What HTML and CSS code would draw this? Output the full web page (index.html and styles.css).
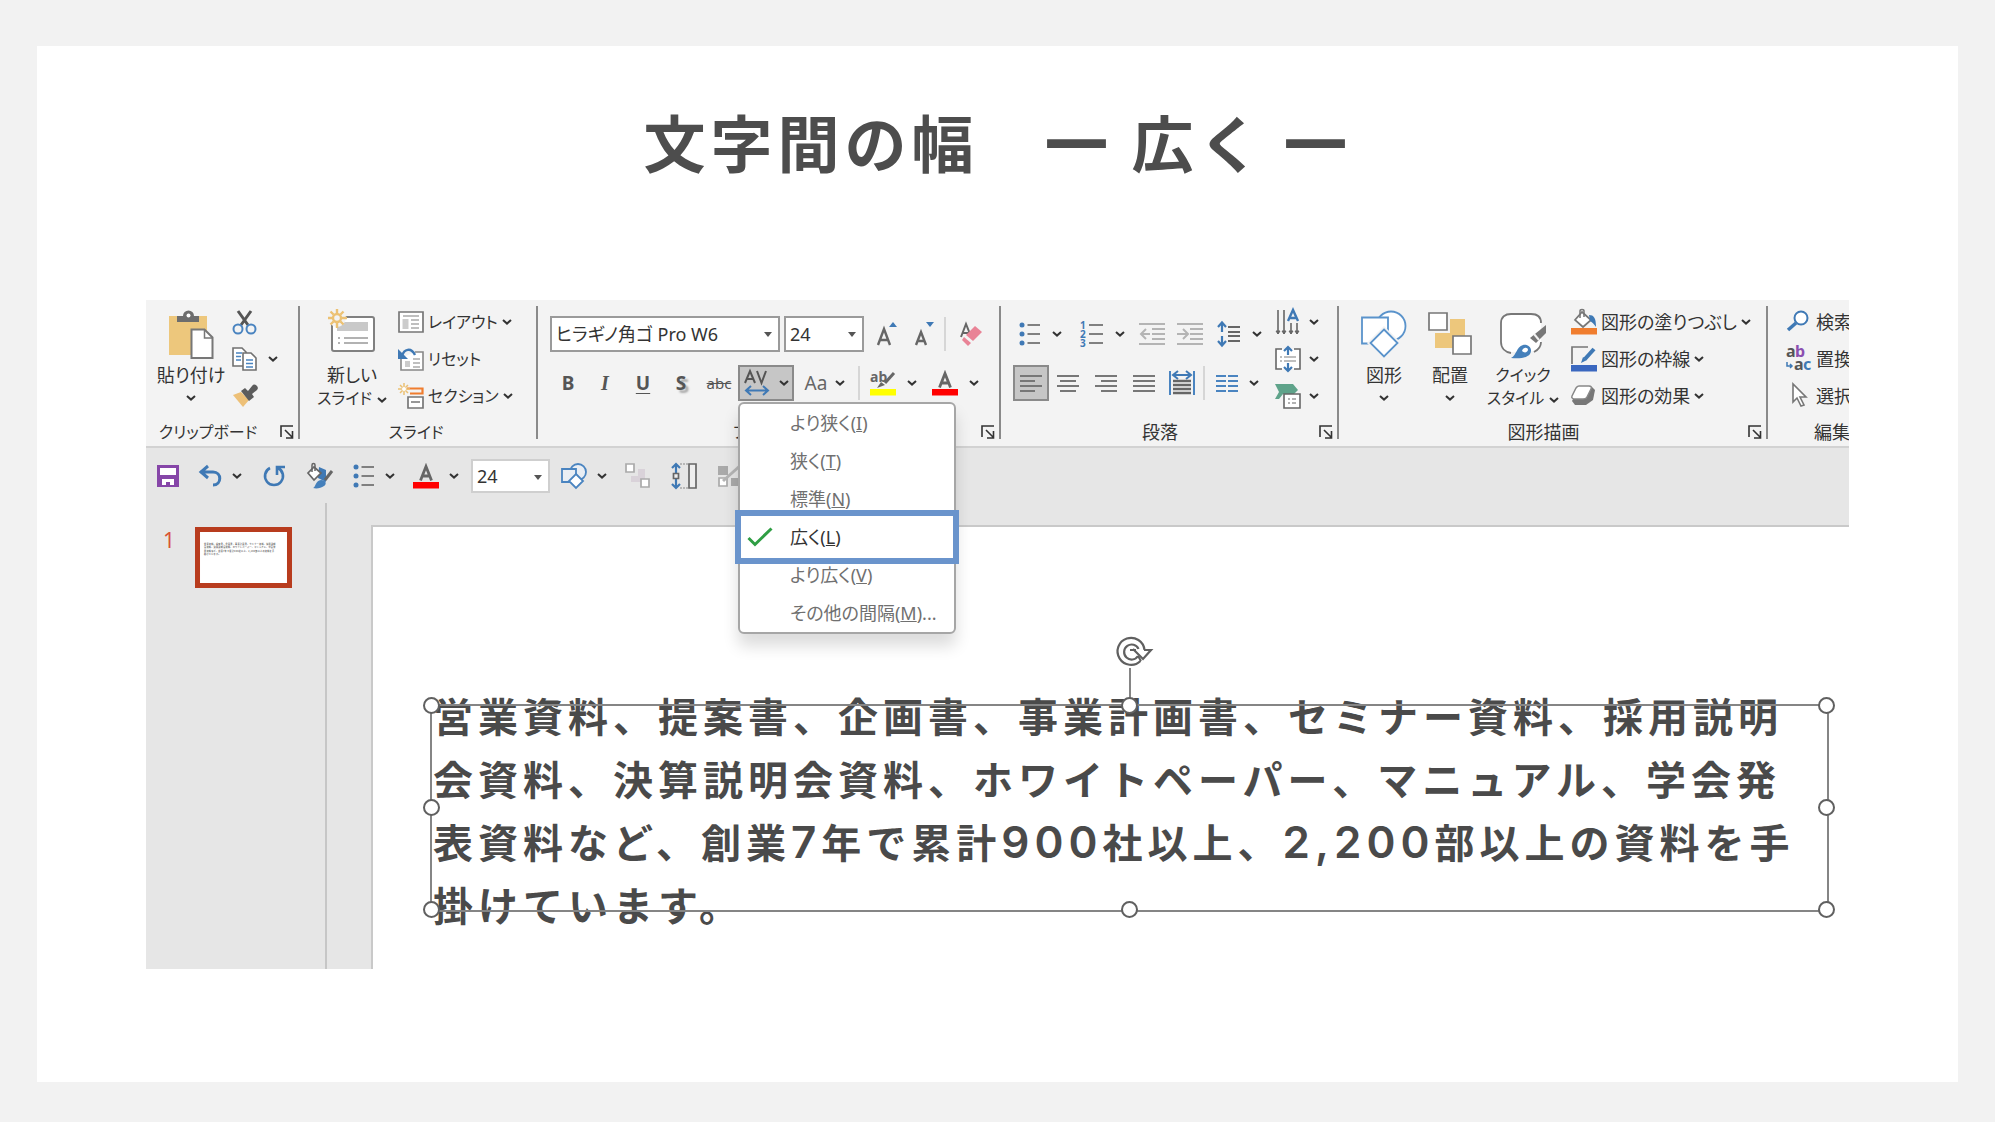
FILE: index.html
```html
<!DOCTYPE html>
<html lang="ja">
<head>
<meta charset="utf-8">
<title>文字間の幅 ― 広く ―</title>
<link rel="stylesheet" href="styles.css">
</head>
<body>
<svg class="sprite" aria-hidden="true">
  <symbol id="chev" viewBox="0 0 10 6"><path d="M1 1l4 3.6L9 1" fill="none" stroke="#333" stroke-width="2"/></symbol>
  <symbol id="launch" viewBox="0 0 14 14"><path d="M1 12V1h12M5 5l7 7M12.500 6v7H6" fill="none" stroke="#333" stroke-width="1.6"/></symbol>
  <symbol id="bullets" viewBox="0 0 22 24"><g fill="#3f79b5"><circle cx="3" cy="3" r="2.500"/><circle cx="3" cy="12" r="2.500"/><circle cx="3" cy="21" r="2.500"/></g><path d="M8.500 3H21M8.500 12H21M8.500 21H21" stroke="#808080" stroke-width="2"/></symbol>
  <symbol id="fontcolor" viewBox="0 0 26 26"><path d="M7.500 17.500L13 3.500l5.500 14M9.500 13h7" fill="none" stroke="#666" stroke-width="2.800"/><path d="M0 19h26v6.500H0z" fill="#f00"/></symbol>
</svg>
<main class="page">
  <h1 class="title">文字間の幅　<span class="dash">―</span> 広く <span class="dash">―</span></h1>
  <div class="app">
    <div class="ribbon">
      <section class="group clipboard">
        <div class="tools">
          <button class="big"><svg width="46" height="48" viewBox="0 0 46 48"><path d="M1 6h38v39H1z" fill="#edc77c"/><path d="M9 12V6h6a5.500 5.500 0 0 1 11 0h5v6z" fill="#6d6d6d"/><circle cx="20.500" cy="5.500" r="2" fill="#fff"/><path d="M23.500 19.500h13l8 8V48h-21z" fill="#fff" stroke="#777" stroke-width="2"/><path d="M36.500 20v8h8" fill="none" stroke="#777" stroke-width="1.500"/></svg><span>貼り付け</span><svg width="10" height="6"><use href="#chev"/></svg></button>
          <div class="stack">
            <button aria-label="切り取り"><svg width="26" height="26" viewBox="0 0 26 26"><path d="M6 2l10 14M19 2L9 16" stroke="#555" stroke-width="3"/><g fill="none" stroke="#4a84c0" stroke-width="2"><circle cx="6" cy="20" r="4.500"/><circle cx="19" cy="20" r="4.500"/></g></svg></button>
            <button aria-label="コピー"><svg width="26" height="26" viewBox="0 0 26 26"><g fill="#fff" stroke="#707070" stroke-width="1.600"><path d="M1 2h9l4 4v14H1z"/><path d="M11 7h8l5 5v12H11z"/></g><path d="M4 7h6M4 10.500h5M4 14h5M14 14h7M14 17.500h7M14 21h7" stroke="#4a84c0" stroke-width="1.700"/></svg><svg width="10" height="6"><use href="#chev"/></svg></button>
            <button aria-label="書式のコピー"><svg width="26" height="26" viewBox="0 0 26 26"><path d="M1 12l8-3 8 8-6 7z" fill="#edc077"/><path d="M9 8l4-3 3 3 4-5a3 3 0 0 1 5 4l-5 4 2 3-5 4z" fill="#5c5c5c"/></svg></button>
          </div>
        </div>
        <footer><span class="kana">クリップボード</span><button aria-label="クリップボードの設定"><svg width="14" height="14"><use href="#launch"/></svg></button></footer>
      </section>

      <section class="group slides">
        <div class="tools">
          <button class="big"><svg width="48" height="48" viewBox="0 0 48 48"><rect x="4" y="7" width="42" height="34" rx="2" fill="#fff" stroke="#808080" stroke-width="2"/><path d="M9 12h31v9H9z" fill="#c9c9c9"/><path d="M16 28h24M16 33h24M10 28h2M10 33h2" stroke="#999" stroke-width="1.500"/><circle cx="9" cy="8" r="9" fill="#f3f3f3"/><g stroke="#ecc173" stroke-width="2.400" fill="none"><circle cx="9" cy="8" r="4"/><path d="M9-1v4M9 13v5M0 8h4M14 8h5M2.500 1.500l3 3M12.500 11.500l3 3M15.500 1.500l-3 3M5.500 11.500l-3 3"/></g></svg><span>新しい</span><span class="kana">スライド<svg width="10" height="6"><use href="#chev"/></svg></span></button>
          <div class="stack">
            <button><svg width="26" height="24" viewBox="0 0 26 24"><path d="M1 2h24v20H1z" fill="#fff" stroke="#777" stroke-width="1.700"/><path d="M5 6h16M13 10h8M13 14h8M13 18h8" stroke="#aaa" stroke-width="1.700"/><path d="M4.500 9h6v10h-6z" fill="#ccc"/></svg><span class="kana">レイアウト</span><svg width="10" height="6"><use href="#chev"/></svg></button>
            <button><svg width="26" height="24" viewBox="0 0 26 24"><path d="M3 11v12h22V5h-8" fill="#fff" stroke="#888" stroke-width="1.600"/><path d="M15 12h7M15 16h7M15 20h7" stroke="#aaa" stroke-width="1.600"/><path d="M7 14h5v6H7z" fill="#ccc"/><path d="M17 8C13 0 6 2 4 9" fill="none" stroke="#3f79b5" stroke-width="2.400"/><path d="M0 2v10h10z" fill="#3f79b5"/></svg><span class="kana">リセット</span></button>
            <button><svg width="26" height="26" viewBox="0 0 26 26"><path d="M9 5.500h15.500v5H12" fill="none" stroke="#f07d2e" stroke-width="2.200"/><path d="M10 14h15v11H10zM13 19h9" fill="#fff" stroke="#777" stroke-width="1.700"/><path d="M6 0v12M0 6h12M2 2l8 8M10 2l-8 8" stroke="#ecc173" stroke-width="1.500"/><circle cx="6" cy="6" r="2" fill="#fff"/></svg><span class="kana">セクション</span><svg width="10" height="6"><use href="#chev"/></svg></button>
          </div>
        </div>
        <footer><span class="kana">スライド</span></footer>
      </section>

      <section class="group font">
        <div class="rows">
          <div class="row">
            <div class="combo name"><select aria-label="フォント"><option>ヒラギノ角ゴ Pro W6</option></select></div>
            <div class="combo size"><select aria-label="フォント サイズ"><option>24</option></select></div>
            <button aria-label="拡大" class="c38"><svg width="22" height="26" viewBox="0 0 22 26"><path d="M2 24L8 8l6 16M4 19h8" fill="none" stroke="#666" stroke-width="2.400"/><path d="M13 6h8l-4-5z" fill="#3f79b5"/></svg></button>
            <button aria-label="縮小" class="c36"><svg width="22" height="26" viewBox="0 0 22 26"><path d="M3 24L8 11l5 13M5 20h6" fill="none" stroke="#666" stroke-width="2.400"/><path d="M13 1h8l-4 5z" fill="#3f79b5"/></svg></button>
            <i class="sep"></i>
            <button aria-label="書式のクリア" class="c46"><svg width="24" height="26" viewBox="0 0 24 26"><path d="M2 16L7 3l4 10M4 12h6" fill="none" stroke="#666" stroke-width="2"/><path d="M16 5l7 6-9 9-7-6z" fill="#e98396"/><path d="M5 16l7 6-3 3-6-6z" fill="#e98396"/></svg></button>
          </div>
          <div class="row">
            <button class="c36 b">B</button>
            <button class="c38 it">I</button>
            <button class="c38 u">U</button>
            <button class="c38 sh">S</button>
            <button class="c38 st">abc</button>
            <div class="spacing">
              <button class="pressed" aria-label="文字の間隔"><svg width="26" height="28" viewBox="0 0 26 28"><path d="M1 14L6 2l5 12M3 10h6M13 2l4.500 12L22 2" fill="none" stroke="#555" stroke-width="2"/><path d="M2 21.500h22M7 17l-5 4.500L7 26M19 17l5 4.500-5 4.500" fill="none" stroke="#3f79b5" stroke-width="2"/></svg><svg width="10" height="6"><use href="#chev"/></svg></button>
              <ul class="menu">
                <li><a href="#">より狭く(<u>I</u>)</a></li>
                <li><a href="#">狭く(<u>T</u>)</a></li>
                <li><a href="#">標準(<u>N</u>)</a></li>
                <li class="checked"><a href="#">広く(<u>L</u>)</a><svg class="tick" width="26" height="20" viewBox="0 0 26 20"><path d="M1.500 11l6.500 6.500L24.500 1.500" fill="none" stroke="#2f9e44" stroke-width="3"/></svg></li>
                <li><a href="#">より広く(<u>V</u>)</a></li>
                <li><a href="#">その他の間隔(<u>M</u>)...</a></li>
              </ul>
            </div>
            <button class="c62 aa"><span>Aa</span><svg width="10" height="6"><use href="#chev"/></svg></button>
            <i class="sep"></i>
            <button class="c62" aria-label="蛍光ペン"><svg width="26" height="26" viewBox="0 0 26 26"><text x="0" y="12" class="ab">ab</text><path d="M24 3l-9 10" stroke="#666" stroke-width="3"/><path d="M7 18l4-6 4 3z" fill="#666"/><path d="M0 19h26v6.500H0z" fill="#ff0"/></svg><svg width="10" height="6"><use href="#chev"/></svg></button>
            <button class="c62" aria-label="フォントの色"><svg width="26" height="26"><use href="#fontcolor"/></svg><svg width="10" height="6"><use href="#chev"/></svg></button>
          </div>
        </div>
        <footer><span class="kana">フォント</span><button aria-label="フォントの設定"><svg width="14" height="14"><use href="#launch"/></svg></button></footer>
      </section>

      <section class="group para">
        <div class="tools">
          <div class="rows">
            <div class="row">
              <button class="c62" aria-label="箇条書き"><svg width="22" height="24"><use href="#bullets"/></svg><svg width="10" height="6"><use href="#chev"/></svg></button>
              <button class="c62" aria-label="段落番号"><svg width="24" height="26" viewBox="0 0 24 26"><g class="num"><text x="0" y="8">1</text><text x="0" y="17">2</text><text x="0" y="26">3</text></g><path d="M9 4h14M9 13h14M9 22h14" stroke="#808080" stroke-width="2"/></svg><svg width="10" height="6"><use href="#chev"/></svg></button>
              <button class="c38" aria-label="インデントを減らす"><svg width="26" height="24" viewBox="0 0 26 24"><path d="M0 2h26M13 7h13M13 12h13M13 17h13M0 22h26M2 12h9M7 7l-5 5 5 5" fill="none" stroke="#b4b4b4" stroke-width="2"/></svg></button>
              <button class="c38" aria-label="インデントを増やす"><svg width="26" height="24" viewBox="0 0 26 24"><path d="M0 2h26M13 7h13M13 12h13M13 17h13M0 22h26M0 12h10M6 7l5 5-5 5" fill="none" stroke="#b4b4b4" stroke-width="2"/></svg></button>
              <button class="c60" aria-label="行間"><svg width="24" height="26" viewBox="0 0 24 26"><path d="M11 6h12M11 11h12M11 15h12M11 20h12" stroke="#666" stroke-width="2"/><path d="M5 2v9M1 6l4-4.500L9 6M5 15v9M1 20l4 4.500L9 20" fill="none" stroke="#3f79b5" stroke-width="2.200"/></svg><svg width="10" height="6"><use href="#chev"/></svg></button>
            </div>
            <div class="row align-row">
              <button class="pressed c36" aria-label="左揃え"><svg width="22" height="18" viewBox="0 0 22 18"><path d="M0 2h22M0 7h15M0 12h22M0 17h15" stroke="#777" stroke-width="2"/></svg></button>
              <button class="c38" aria-label="中央揃え"><svg width="22" height="18" viewBox="0 0 22 18"><path d="M0 2h22M3 7h16M0 12h22M3 17h16" stroke="#777" stroke-width="2"/></svg></button>
              <button class="c38" aria-label="右揃え"><svg width="22" height="18" viewBox="0 0 22 18"><path d="M0 2h22M6 7h16M0 12h22M6 17h16" stroke="#777" stroke-width="2"/></svg></button>
              <button class="c38" aria-label="両端揃え"><svg width="22" height="18" viewBox="0 0 22 18"><path d="M0 2h22M0 7h22M0 12h22M0 17h22" stroke="#777" stroke-width="2"/></svg></button>
              <button class="c38" aria-label="均等割り付け"><svg width="26" height="26" viewBox="0 0 26 26"><path d="M1 1v24M25 1v24" stroke="#4a84c0" stroke-width="2"/><path d="M4 5h18M9 1L4 5l5 4M17 1l5 4-5 4" fill="none" stroke="#3f79b5" stroke-width="2"/><path d="M4 11h18M4 15h18M4 19h18M4 23h18" stroke="#666" stroke-width="2.400"/></svg></button>
              <i class="sep"></i>
              <button class="c60" aria-label="段組み"><svg width="22" height="18" viewBox="0 0 22 18"><path d="M0 2h10M12 2h10M0 7h10M12 7h10M0 12h10M12 12h10M0 17h10M12 17h10" stroke="#4a84c0" stroke-width="2.200"/></svg><svg width="10" height="6"><use href="#chev"/></svg></button>
            </div>
          </div>
          <div class="stack">
            <button aria-label="文字列の方向"><svg width="26" height="26" viewBox="0 0 26 26"><path d="M3 1v24M9 1v24M16 14v11M22 14v11" stroke="#666" stroke-width="1.600"/><path d="M1 22h4l-2 3zM7 22h4l-2 3zM14 22h4l-2 3zM20 22h4l-2 3z" fill="#666" stroke="#666"/><path d="M13 12L18 1l5 11M15 9h6" fill="none" stroke="#3f79b5" stroke-width="2.400"/></svg><svg width="10" height="6"><use href="#chev"/></svg></button>
            <button aria-label="文字の配置"><svg width="26" height="26" viewBox="0 0 26 26"><path d="M1 3h24v20H1z" fill="#fff"/><path d="M7 3H1v20h6M19 3h6v20h-6" fill="none" stroke="#666" stroke-width="1.600"/><path d="M5 11h2M9 11h12M5 15h2M9 15h12" stroke="#aaa" stroke-width="1.500"/><path d="M13 1v8M9 5l4-4 4 4M13 17v8M9 21l4 4 4-4" fill="none" stroke="#3f79b5" stroke-width="2.200"/></svg><svg width="10" height="6"><use href="#chev"/></svg></button>
            <button aria-label="SmartArt に変換"><svg width="26" height="26" viewBox="0 0 26 26"><path d="M0 1h18l5 6-4 4H8l-4 5H0l4-7z" fill="#5fa38a"/><path d="M9 11h16v14H9z" fill="#fff" stroke="#666" stroke-width="1.600"/><path d="M13 16h2M17 16h4M13 20h2M17 20h4" stroke="#999" stroke-width="1.600"/></svg><svg width="10" height="6"><use href="#chev"/></svg></button>
          </div>
        </div>
        <footer><span>段落</span><button aria-label="段落の設定"><svg width="14" height="14"><use href="#launch"/></svg></button></footer>
      </section>

      <section class="group draw">
        <div class="tools">
          <button class="big"><svg width="48" height="48" viewBox="0 0 48 48"><g fill="#fff" stroke="#5a93cb" stroke-width="1.800"><circle cx="31" cy="16" r="14.500"/><path d="M2 7.500h26v26H2z"/><path d="M24 18L39 33 24 48 9 33z" stroke="#f3f3f3" stroke-width="3"/><path d="M24 19.500L37.500 33 24 46.500 10.500 33z"/></g></svg><span>図形</span><svg width="10" height="6"><use href="#chev"/></svg></button>
          <button class="big"><svg width="44" height="48" viewBox="0 0 44 48"><path d="M22 9h15v29H22zM7 23h16v15H7z" fill="#edc77c"/><path d="M1 3h18v17H1zM25 26h18v18H25z" fill="#fff" stroke="#777" stroke-width="1.700"/></svg><span>配置</span><svg width="10" height="6"><use href="#chev"/></svg></button>
          <button class="big"><svg width="48" height="48" viewBox="0 0 48 48"><path d="M12 42C6 42 2 38 2 32V13C2 7 6 4 12 4h20c6 0 10 3 10 9v19c0 4-2 8-6 9z" fill="#fff"/><path d="M12 43C6 42 2 38 2 32V13C2 7 6 4 12 4h20c6 0 10 3 10 9M42 32c0 5-3 8-7 10" fill="none" stroke="#777" stroke-width="1.800"/><path d="M47 15v8L37 33l-6-5z" fill="#777"/><path d="M35 24l5 6" stroke="#f3f3f3" stroke-width="2"/><path d="M12 48c6-3 5-11 12-13 6-1 10 4 7 9-3 4-11 5-19 4z" fill="#4580bb"/><path d="M23 41c1-4 6-4 6-1-1 3-4 3-6 1z" fill="#fff"/></svg><span class="kana">クイック</span><span class="kana">スタイル<svg width="10" height="6"><use href="#chev"/></svg></span></button>
          <div class="stack">
            <button><svg width="26" height="26" viewBox="0 0 26 26"><path d="M0 19h26v6.500H0z" fill="#f07d2e"/><path d="M11 3l9 8-8 7-8-7z" fill="#fff" stroke="#777" stroke-width="1.700"/><path d="M9 9V2c0-2 4-2 4 0v6" fill="none" stroke="#777" stroke-width="1.500"/><path d="M18 6c5 0 7 3 7 12-2-3-4-5-6-6z" fill="#3f79b5"/></svg><span>図形の塗りつぶし</span><svg width="10" height="6"><use href="#chev"/></svg></button>
            <button><svg width="26" height="26" viewBox="0 0 26 26"><path d="M0 19h26v6.500H0z" fill="#3a67bf"/><path d="M17 1H1v17" fill="none" stroke="#777" stroke-width="1.700"/><path d="M23 3L14 13" stroke="#3f79b5" stroke-width="4"/><path d="M10 17l2-6 4 3z" fill="#3f79b5"/></svg><span>図形の枠線</span><svg width="10" height="6"><use href="#chev"/></svg></button>
            <button><svg width="26" height="26" viewBox="0 0 26 26"><path d="M8 4h13l3 3-2 10-7 5H4l-3-4z" fill="#777"/><path d="M8 3h10c2 0 3 1 2 3l-4 8c-1 2-2 2-4 2H4c-2 0-4-1-3-3l4-8c1-1 1-2 3-2z" fill="#fff" stroke="#888" stroke-width="1.500"/></svg><span>図形の効果</span><svg width="10" height="6"><use href="#chev"/></svg></button>
          </div>
        </div>
        <footer><span>図形描画</span><button aria-label="図形の書式設定"><svg width="14" height="14"><use href="#launch"/></svg></button></footer>
      </section>

      <section class="group edit">
        <div class="tools">
          <div class="stack">
            <button><svg width="26" height="26" viewBox="0 0 26 26"><circle cx="15" cy="9" r="6.500" fill="#fff" stroke="#3f79b5" stroke-width="2"/><path d="M10 14l-8 7" stroke="#3f79b5" stroke-width="3.500"/></svg><span>検索</span></button>
            <button><svg width="26" height="26" viewBox="0 0 26 26"><g class="repl"><text x="0" y="11" fill="#555">a</text><text x="9" y="11" fill="#8b4fb0">b</text><text x="8" y="24" fill="#555">a</text><text x="17" y="24" fill="#3f79b5">c</text></g><path d="M1 16v4h5M4 18l2 2-2 2" fill="none" stroke="#3f79b5" stroke-width="1.500"/></svg><span>置換</span></button>
            <button><svg width="26" height="26" viewBox="0 0 26 26"><path d="M7 1v18l4-4 4 8 3-1-4-8h6z" fill="#fff" stroke="#777" stroke-width="1.600"/></svg><span>選択</span></button>
          </div>
        </div>
        <footer><span>編集</span></footer>
      </section>
    </div>

    <div class="quick">
      <button class="q42" aria-label="保存"><svg width="22" height="24" viewBox="0 0 22 24"><path d="M1.500 2.500h19v19h-19z" fill="#fff" stroke="#8646a8" stroke-width="3"/><path d="M1 11h20v11H1z" fill="#8646a8"/><path d="M5 15h12v6h-4v-3h-4v3H5z" fill="#fff"/></svg></button>
      <button class="q62" aria-label="元に戻す"><svg width="24" height="24" viewBox="0 0 24 24"><path d="M2 8h13c9 0 9 13 0 13M10 2L3 8l7 6" fill="none" stroke="#3f79b5" stroke-width="3"/></svg><svg width="10" height="6"><use href="#chev"/></svg></button>
      <button class="q46" aria-label="やり直し"><svg width="22" height="24" viewBox="0 0 22 24"><path d="M7 4a9 9 0 1 0 8 0M14 11V3h8" fill="none" stroke="#3f79b5" stroke-width="2.600"/></svg></button>
      <button class="q46" aria-label="書式"><svg width="26" height="26" viewBox="0 0 26 26"><path d="M12 4l7 3v12l-8-4z" fill="#3f79b5"/><path d="M7 4l7 6-7 7-6-7z" fill="#fff" stroke="#666" stroke-width="1.700"/><path d="M5 9V2c0-2 3-2 3 0v6" fill="none" stroke="#666" stroke-width="1.500"/><path d="M25 8l-7 9" stroke="#666" stroke-width="3"/><path d="M6 25c3-1 2-7 8-8 5 0 6 4 3 6-3 2-7 3-11 2z" fill="#4580bb"/></svg></button>
      <button class="q62" aria-label="箇条書き"><svg width="22" height="24"><use href="#bullets"/></svg><svg width="10" height="6"><use href="#chev"/></svg></button>
      <button class="q62" aria-label="フォントの色"><svg width="26" height="26"><use href="#fontcolor"/></svg><svg width="10" height="6"><use href="#chev"/></svg></button>
      <div class="combo qsize"><select aria-label="サイズ"><option>24</option></select></div>
      <button class="q62" aria-label="図形"><svg width="26" height="26" viewBox="0 0 26 26"><g fill="#e9eef4" stroke="#4a84c0" stroke-width="1.800"><circle cx="17" cy="9" r="8"/><path d="M1 6h14v13H1z"/><path d="M15 11l7 7-7 7-7-7z" fill="#fff"/></g></svg><svg width="10" height="6"><use href="#chev"/></svg></button>
      <button class="q46" aria-label="配置"><svg width="26" height="26" viewBox="0 0 26 26"><path d="M13 6h7v13h-7zM6 13h8v6H6z" fill="#d9d2d9"/><path d="M1 1h8v8H1zM16 16h8v8h-8z" fill="#fff" stroke="#aaa" stroke-width="1.700"/></svg></button>
      <button class="q46" aria-label="整列"><svg width="26" height="26" viewBox="0 0 26 26"><path d="M5 1v9M1 5l4-4 4 4M5 16v9M1 21l4 4 4-4" fill="none" stroke="#3f79b5" stroke-width="2.200"/><path d="M2.500 10.500h5v5h-5zM18 1h7v24h-7z" fill="#eee" stroke="#666" stroke-width="1.700"/><path d="M9 1h8M9 25h8" stroke="#888" stroke-dasharray="2 1"/></svg></button>
      <button class="q46" aria-label="図形の編集"><svg width="26" height="26" viewBox="0 0 26 26"><path d="M1 3h10v9H1zM14 15h10v8H14z" fill="#aaa"/><path d="M2 15h8v8H2z" fill="#fff" stroke="#aaa" stroke-width="1.700"/><path d="M25 1L6 18" stroke="#b5b5b5" stroke-width="3"/></svg></button>
    </div>

    <div class="workspace">
      <aside class="thumbs">
        <span class="no">1</span>
        <svg class="thumb" width="97" height="61" viewBox="-94 -94 1820 1144" role="img" aria-label="スライド 1"><path d="M-47-47h1726v1050H-47z" fill="#fff" stroke="#b83c1e" stroke-width="94"/><g class="mini"><text x="75" y="246">営業資料、提案書、企画書、事業計画書、セミナー資料、採用説明</text><text x="75" y="309">会資料、決算説明会資料、ホワイトペーパー、マニュアル、学会発</text><text x="75" y="372">表資料など、創業7年で累計900社以上、2,200部以上の資料を手</text><text x="75" y="435">掛けています。</text></g></svg>
      </aside>
      <article class="slide">
        <div class="textbox">
          <p>営業資料、提案書、企画書、事業計画書、セミナー資料、採用説明<br>会資料、決算説明会資料、ホワイトペーパー、マニュアル、学会発<br>表資料など、創業<span class="n">7</span>年で累計<span class="n">900</span>社以上、<span class="n">2,200</span>部以上の資料を手<br>掛けています。</p>
          <div class="frame">
            <svg class="rotate" width="42" height="34" viewBox="0 0 42 34"><path d="M27.500 25A13.500 13.500 0 1 1 31.500 14" fill="none" stroke="#606060" stroke-width="2.200"/><path d="M25 20a7.500 7.500 0 1 1 .5-7" fill="none" stroke="#606060" stroke-width="2.200"/><path d="M25 20l3 5" stroke="#606060" stroke-width="2"/><path d="M17 14h6M31 14h7l-8 9-10-10" fill="#fff" stroke="#606060" stroke-width="2.200"/></svg>
            <i class="stem"></i>
            <i class="h tl"></i><i class="h tc"></i><i class="h tr"></i><i class="h ml"></i><i class="h mr"></i><i class="h bl"></i><i class="h bc"></i><i class="h br"></i>
          </div>
        </div>
      </article>
    </div>
  </div>
</main>
</body>
</html>
```
FILE: styles.css
```css
* { box-sizing: border-box; }
body {
  margin: 0;
  padding: 46px 37px 40px;
  background: #f2f2f2;
  color: #333;
  font: 18px/24px "Noto Sans", "Noto Sans CJK JP", sans-serif;
}
svg { display: block; flex: none; overflow: visible; }
.sprite { position: absolute; width: 0; height: 0; }
.page { background: #fff; padding: 55px 109px 113px; }
.title {
  margin: 0 0 119px;
  text-align: center;
  color: #4d4d4d;
  font: 700 62px/80px "Noto Sans CJK JP", sans-serif;
  letter-spacing: 5px;
  white-space: nowrap;
}
.dash { -webkit-text-stroke: 6px #4d4d4d; }
.app { background: #e6e6e6; overflow: hidden; }

button, select {
  margin: 0;
  padding: 0;
  border: 0;
  background: none;
  color: inherit;
  font: inherit;
}
button {
  display: flex;
  align-items: center;
  justify-content: center;
  font-feature-settings: "palt";
  white-space: nowrap;
}
.kana { font-size: 16px; }

/* ribbon */
.ribbon {
  position: relative;
  z-index: 1;
  display: flex;
  padding: 6px 0 7px;
  background: #f3f3f3;
  border-bottom: 2px solid #d2d2d2;
}
.group {
  flex: none;
  display: flex;
  flex-direction: column;
  justify-content: space-between;
  height: 133px;
  border-right: 2px solid #8a8a8a;
}
.clipboard { width: 154px; }
.slides { width: 238px; }
.font { width: 463px; }
.para { width: 338px; }
.draw { width: 429px; }
.edit { width: 132px; }
.tools { display: flex; }
.group footer {
  display: flex;
  align-items: center;
  height: 14px;
  padding-right: 4px;
  line-height: 14px;
  font-feature-settings: "palt";
}
.group footer span { flex: 1; text-align: center; white-space: nowrap; }
.clipboard footer span { padding-right: 10px; }
.big {
  flex-direction: column;
  justify-content: flex-start;
  width: 66px;
  padding-top: 4px;
  line-height: 23px;
}
.big > svg:first-child { margin-bottom: 6px; }
.big > svg:last-child { margin-top: 8px; }
.big span svg { display: inline-block; margin-left: 5px; vertical-align: middle; }
.stack { display: flex; flex-direction: column; gap: 5px; }
.stack button { height: 32px; justify-content: flex-start; gap: 4px; }
.stack button svg + svg { margin-left: 4px; }
.clipboard .tools { gap: 8px; padding-left: 12px; }
.clipboard .stack button svg + svg { margin-left: 6px; }
.slides .tools { gap: 11px; padding-left: 17px; }
.slides .big { width: 70px; }

.rows { display: flex; flex-direction: column; gap: 13px; padding-top: 10px; }
.row { display: flex; align-items: center; height: 36px; }
.font .rows { padding-left: 12px; }
.row button { height: 36px; gap: 11px; flex: none; }
.c36 { width: 36px; }
.c38 { width: 38px; }
.c46 { width: 46px; }
.c60 { width: 60px; }
.c62 { width: 62px; }
.sep { flex: none; width: 2px; height: 34px; margin: 0 2px; background: #d6d6d6; }
.combo {
  position: relative;
  height: 36px;
  border: 2px solid #9a9a9a;
  background: #fff;
}
.combo::after {
  content: "";
  position: absolute;
  right: 6px;
  top: 14px;
  border: 4px solid transparent;
  border-top: 5px solid #555;
  border-bottom: 0;
}
.combo select {
  appearance: none;
  width: 100%;
  height: 100%;
  padding: 0 4px;
  font-feature-settings: "palt";
}
.name { width: 230px; margin-right: 4px; }
.size { width: 80px; margin-right: 4px; }
.b, .it, .u, .sh { font-weight: 700; font-size: 19px; color: #555; }
.row .it { font: italic 700 20px "Liberation Serif", serif; }
.row .u { text-decoration: underline; text-underline-offset: 3px; }
.sh { text-shadow: 3px 3px 2px #aaa; }
.row .st { font-size: 15px; color: #555; text-decoration: line-through; }
.row .aa { gap: 8px; font-size: 19px; color: #666; }
.ab { font: 700 14px "Noto Sans", sans-serif; fill: #666; }
.num { font: 700 10px "Noto Sans", sans-serif; fill: #3f79b5; }
.repl { font: 700 16px "Noto Sans", sans-serif; }
.pressed { background: #c6c6c6; outline: 2px solid #8a8a8a; outline-offset: -2px; }
.spacing { position: relative; }
.row .spacing .pressed { width: 56px; gap: 9px; }
.para .rows { width: 266px; padding-left: 8px; }
.align-row { padding-left: 4px; }
.para .stack { padding-left: 8px; }
.draw .tools { padding-left: 12px; }
.draw .big:nth-child(3) { width: 76px; margin-left: 2px; }
.draw .stack { padding-left: 10px; }
.edit { border: 0; }
.edit .tools { padding-left: 18px; }

/* character spacing menu */
.menu {
  position: absolute;
  left: 0;
  top: 37px;
  width: 218px;
  margin: 0;
  padding: 0;
  list-style: none;
  background: #fff;
  border: 2px solid #a6a6a6;
  border-radius: 6px;
  box-shadow: 0 12px 16px rgba(0, 0, 0, .14);
}
.menu li { position: relative; height: 38px; padding-left: 50px; line-height: 38px; }
.menu a {
  color: #707070;
  text-decoration: none;
  white-space: nowrap;
  font-feature-settings: "palt";
}
.menu .checked a { color: #333; }
.menu .checked::before {
  content: "";
  position: absolute;
  inset: -8px -5px;
  border: 6px solid #6a94cc;
}
.tick { position: absolute; left: 7px; top: 9px; }

/* quick access bar */
.quick { display: flex; align-items: center; height: 55px; padding-left: 1px; }
.quick button { gap: 10px; height: 34px; flex: none; }
.q42 { width: 42px; }
.q46 { width: 46px; }
.q62 { width: 62px; }
.qsize { width: 79px; height: 34px; border-color: #cfcfcf; margin: 0 3px 0 4px; }

/* slide area */
.workspace { display: flex; }
.thumbs {
  flex: none;
  display: flex;
  align-items: flex-start;
  width: 181px;
  padding: 24px 0 0 17px;
  border-right: 2px solid #c6c6c6;
}
.no { width: 32px; color: #d95436; font-size: 21px; line-height: 26px; }
.mini { font: 700 40px "Noto Sans CJK JP", sans-serif; letter-spacing: 5px; fill: #666; }
.slide {
  flex: 1;
  min-width: 0;
  margin: 22px 0 0 44px;
  padding: 157px 20px 33px 57px;
  background: #fff;
  border: solid #c9c9c9;
  border-width: 2px 0 0 2px;
}
.textbox { position: relative; padding-left: 3px; }
.textbox p {
  margin: 0;
  color: #4a4a4a;
  font: 700 40px/63px "Noto Sans CJK JP", sans-serif;
  letter-spacing: 5px;
  white-space: nowrap;
}
.n { font-family: Inter, sans-serif; font-size: 44px; font-weight: 600; line-height: 40px; }
.frame { position: absolute; inset: 20px 0 24px; border: 2px solid #858585; }
.h {
  position: absolute;
  width: 17px;
  height: 17px;
  margin: -9px;
  border: 2px solid #606060;
  border-radius: 50%;
  background: #fff;
}
.tl, .ml, .bl { left: 0; }
.tc, .bc { left: 50%; }
.tr, .mr, .br { left: 100%; }
.tl, .tc, .tr { top: 0; }
.ml, .mr { top: 50%; }
.bl, .bc, .br { top: 100%; }
.stem { position: absolute; left: 50%; bottom: 100%; width: 2px; height: 38px; margin-left: -1px; background: #858585; }
.rotate { position: absolute; left: 50%; bottom: 100%; margin: 0 0 36px -17px; }
```
